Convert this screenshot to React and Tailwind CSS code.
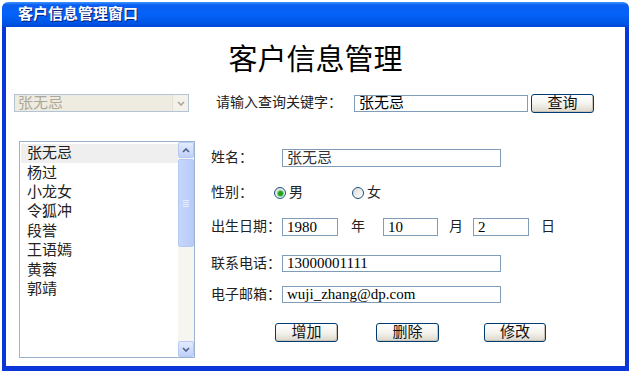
import React from "react";

const F = { fontFamily: '"Liberation Serif","Noto Sans CJK SC",serif' };

function XPButton({ children, w = "w-[63px]", h = "h-[19px]" }) {
  return (
    <div
      className={`${w} ${h} shrink-0 flex items-center justify-center rounded-[3px] border border-[#003c74] bg-gradient-to-b from-[#ffffff] via-[#f4f3ee] to-[#dcd7cb] text-[15px] leading-none text-[#111] whitespace-nowrap shadow-[inset_-1px_-1px_0_#c9c4b5]`}
    >
      {children}
    </div>
  );
}

function Radio({ checked }) {
  return (
    <div className="shrink-0 w-[12px] h-[12px] rounded-full border border-[#1c5180] bg-gradient-to-br from-[#dcdbd5] to-white flex items-center justify-center">
      {checked && <div className="w-[5px] h-[5px] rounded-full bg-[#21a121] shadow-[0_0_0_1px_#7ed17e]" />}
    </div>
  );
}

function Chevron({ up, color = "#4d6185" }) {
  return (
    <svg width="8" height="5" viewBox="0 0 8 5">
      <path
        d={up ? "M1 4 L4 1 L7 4" : "M1 1 L4 4 L7 1"}
        fill="none"
        stroke={color}
        strokeWidth="1.6"
      />
    </svg>
  );
}

function Input({ w, children, h = "h-[18px]", color = "text-black" }) {
  return (
    <div className={`${w} ${h} shrink-0 border border-[#7f9db9] bg-white flex items-center pl-[4px] text-[15px] leading-none whitespace-nowrap ${color}`}>
      {children}
    </div>
  );
}

function Label({ w = "w-[71px]", children }) {
  return <div className={`${w} shrink-0 whitespace-nowrap text-[14px] leading-none text-[#222]`}>{children}</div>;
}

export default function App() {
  const names = ["张无忌", "杨过", "小龙女", "令狐冲", "段誉", "王语嫣", "黄蓉", "郭靖"];
  return (
    <div className="w-[632px] h-[376px] bg-white pt-[2px] pl-[2px]" style={F}>
      <div className="w-[627px] h-[369px] flex flex-col">
        {/* title bar */}
        <div className="h-[25px] rounded-t-[6px] bg-[linear-gradient(to_bottom,#3d95ff_0%,#0a5ff0_12%,#0562f8_45%,#0058ea_80%,#0048d4_100%)] flex items-center pl-[16px]">
          <span className="text-white text-[15px] font-bold leading-none whitespace-nowrap [text-shadow:1px_1px_0_#0a1f7a]">
            客户信息管理窗口
          </span>
        </div>
        {/* body */}
        <div className="flex-1 border-l-4 border-r-4 border-b-[5px] border-[#0a35d8] bg-white flex flex-col">
          <div className="mt-[15px] h-[30px] flex items-center justify-center text-[29px] leading-none text-black whitespace-nowrap" style={{ fontFamily: '"Noto Sans CJK SC",sans-serif' }}>
            客户信息管理
          </div>
          {/* search row */}
          <div className="mt-[21px] h-[20px] flex items-center">
            <div className="ml-[8px] w-[175px] h-[18px] shrink-0 border border-[#b3c3d8] bg-[#eeebe0] flex items-center">
              <span className="pl-[3px] text-[15px] leading-none text-[#aca899] flex-1 whitespace-nowrap">张无忌</span>
              <div className="w-[16px] h-[16px] bg-[#f3f1ea] border-l border-[#e4e1d6] flex items-center justify-center">
                <Chevron color="#a8a596" />
              </div>
            </div>
            <div className="ml-[27px]">
              <Label w="w-[138px]">请输入查询关键字：</Label>
            </div>
            <Input w="w-[174px]" h="h-[17px]">张无忌</Input>
            <div className="ml-[3px]">
              <XPButton>查询</XPButton>
            </div>
          </div>
          {/* main */}
          <div className="mt-[28px] flex">
            {/* list */}
            <div className="ml-[13px] w-[176px] h-[217px] shrink-0 border border-[#9cb3cf] bg-white flex">
              <div className="flex-1 pt-[2px] pl-[1px]">
                {names.map((n, i) => (
                  <div
                    key={n}
                    className={`h-[19.4px] flex items-center pl-[6px] text-[15px] leading-none text-[#222] whitespace-nowrap ${i === 0 ? "bg-[#efefef]" : ""}`}
                  >
                    {n}
                  </div>
                ))}
              </div>
              <div className="w-[16px] flex flex-col bg-[#f6f5f0]">
                <div className="h-[16px] rounded-[2px] border border-[#b6c9f3] bg-gradient-to-b from-[#e3ebff] to-[#bfd0f8] flex items-center justify-center">
                  <Chevron up />
                </div>
                <div className="mt-[1px] h-[88px] rounded-[2px] border border-[#b6c9f3] bg-gradient-to-r from-[#c6d6fc] to-[#b8cbf8] flex flex-col items-center justify-center gap-[1px]">
                  <div className="w-[6px] h-[1px] bg-[#e8eeff]" />
                  <div className="w-[6px] h-[1px] bg-[#e8eeff]" />
                  <div className="w-[6px] h-[1px] bg-[#e8eeff]" />
                  <div className="w-[6px] h-[1px] bg-[#e8eeff]" />
                </div>
                <div className="flex-1" />
                <div className="h-[16px] rounded-[2px] border border-[#b6c9f3] bg-gradient-to-b from-[#e3ebff] to-[#bfd0f8] flex items-center justify-center">
                  <Chevron />
                </div>
              </div>
            </div>
            {/* form */}
            <div className="ml-[16px] flex flex-col text-[14px] leading-none text-[#222]">
              <div className="mt-[8px] h-[18px] flex items-center">
                <Label>姓名：</Label>
                <Input w="w-[219px]" color="text-[#333]">张无忌</Input>
              </div>
              <div className="mt-[17px] h-[18px] flex items-center">
                <Label w="w-[63px]">性别：</Label>
                <Radio checked />
                <span className="ml-[3px] text-[14px]">男</span>
                <div className="ml-[49px]"><Radio /></div>
                <span className="ml-[3px] text-[14px]">女</span>
              </div>
              <div className="mt-[16px] h-[18px] flex items-center">
                <Label>出生日期：</Label>
                <Input w="w-[56px]">1980</Input>
                <span className="ml-[13px] w-[32px] shrink-0 text-[14px]">年</span>
                <Input w="w-[55px]">10</Input>
                <span className="ml-[11px] w-[24px] shrink-0 text-[14px]">月</span>
                <Input w="w-[56px]">2</Input>
                <span className="ml-[12px] text-[14px]">日</span>
              </div>
              <div className="mt-[19px] h-[17px] flex items-center">
                <Label>联系电话：</Label>
                <Input w="w-[219px]" h="h-[17px]">13000001111</Input>
              </div>
              <div className="mt-[14px] h-[17px] flex items-center">
                <Label>电子邮箱：</Label>
                <Input w="w-[219px]" h="h-[17px]">wuji_zhang@dp.com</Input>
              </div>
              <div className="mt-[20px] h-[19px] flex items-center">
                <div className="ml-[64px]"><XPButton>增加</XPButton></div>
                <div className="ml-[38px]"><XPButton>删除</XPButton></div>
                <div className="ml-[45px]"><XPButton w="w-[62px]">修改</XPButton></div>
              </div>
            </div>
          </div>
        </div>
      </div>
    </div>
  );
}
